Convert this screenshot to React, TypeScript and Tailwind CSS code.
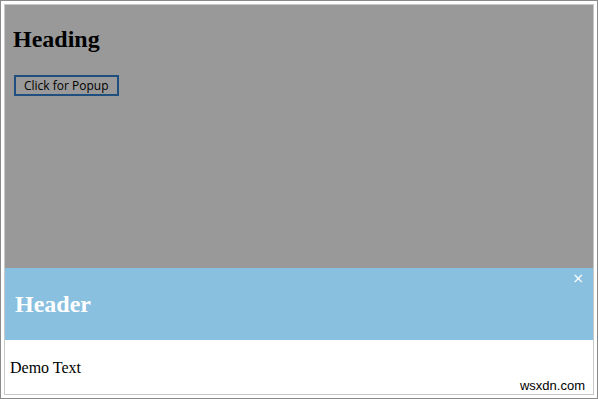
import React from "react";

export default function App() {
  return (
    <div className="w-[598px] h-[399px] bg-white border border-[#8a8a8a] p-[3px] relative overflow-hidden">
      <div className="w-full h-full border border-[#c8c8c8] flex flex-col overflow-hidden">
        <div className="h-[263px] bg-[#999999] px-[8px] pt-[20px]">
          <h2 className="font-['Liberation_Serif',serif] font-bold text-[24px] leading-[28px] text-black">Heading</h2>
          <button className="mt-[22px] ml-[1px] h-[21px] px-[8px] border-2 border-[#1f4f7f] bg-[#9a9a9a] font-['Open_Sans',sans-serif] text-[12px] leading-none text-black">
            Click for Popup
          </button>
        </div>
        <div className="h-[72px] bg-[#89bfdf] relative flex items-center px-[10px]">
          <h2 className="font-['Liberation_Serif',serif] font-bold text-[24px] leading-[28px] text-white">Header</h2>
          <span className="absolute right-[9px] top-[3px] text-white text-[14px] leading-none font-['DejaVu_Sans',sans-serif]">×</span>
        </div>
        <div className="flex-1 bg-white px-[5px] pt-[18px]">
          <p className="font-['Liberation_Serif',serif] text-[16px] leading-[20px] text-black">Demo Text</p>
        </div>
      </div>
      <span className="absolute right-[12px] bottom-[6px] font-['Liberation_Sans',sans-serif] text-[13px] leading-none text-black">wsxdn.com</span>
    </div>
  );
}
